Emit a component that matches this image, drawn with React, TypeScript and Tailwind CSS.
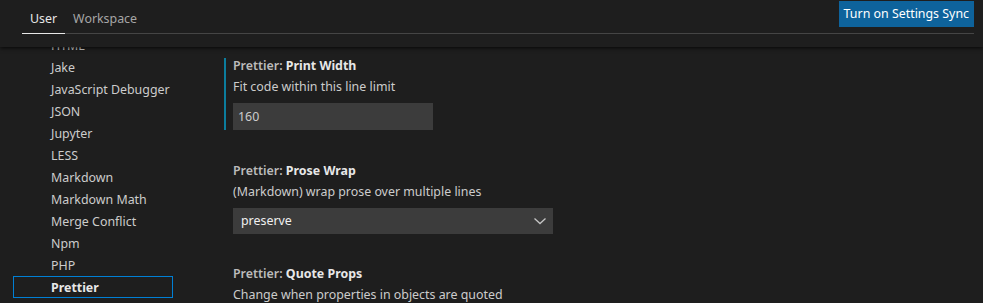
import React from "react";

const navItems = [
  "HTML",
  "Jake",
  "JavaScript Debugger",
  "JSON",
  "Jupyter",
  "LESS",
  "Markdown",
  "Markdown Math",
  "Merge Conflict",
  "Npm",
  "PHP",
  "Prettier",
];

function Chevron() {
  return (
    <svg width="14" height="8" viewBox="0 0 14 8" fill="none">
      <path d="M1.5 1.5 L7 6.5 L12.5 1.5" stroke="#c5c5c5" strokeWidth="1.3" />
    </svg>
  );
}

export default function App() {
  return (
    <div
      className="w-[983px] h-[303px] overflow-hidden bg-[#1e1e1e] text-[12.4px] text-[#cccccc] flex flex-col whitespace-nowrap"
      style={{ fontFamily: '"Noto Sans", "Open Sans", sans-serif' }}
    >
      <div className="h-[47px] shrink-0 relative z-10 bg-[#1e1e1e] shadow-[0_1px_4px_rgba(0,0,0,0.8)]">
        <div className="ml-[22px] mr-[9px] h-[34px] flex justify-between border-b border-[#454545]">
          <div className="flex items-end">
            <div className="px-[8px] leading-[20px] pb-[4px] -mb-px border-b border-[#e7e7e7] text-[#e7e7e7]">
              User
            </div>
            <div className="px-[8px] leading-[20px] pb-[4px] -mb-px border-b border-transparent text-[#a6a6a6]">
              Workspace
            </div>
          </div>
          <button className="mt-px h-[26px] px-[5px] bg-[#0e639c] text-white text-[12.4px] leading-[26px] self-start">
            Turn on Settings Sync
          </button>
        </div>
      </div>

      <div className="flex flex-1 min-h-0">
        <div className="w-[211px] shrink-0 overflow-hidden pl-[13px]">
          <div className="-mt-[12px] w-[160px] flex flex-col">
            {navItems.map((n) =>
              n === "Prettier" ? (
                <div
                  key={n}
                  className="-mt-px h-[22px] leading-[22px] pl-[37px] border border-[#007fd4] font-bold text-[#e7e7e7]"
                >
                  {n}
                </div>
              ) : (
                <div key={n} className="h-[22px] leading-[22px] pl-[38px]">
                  {n}
                </div>
              )
            )}
          </div>
        </div>

        <div className="flex-1 flex flex-col pt-[11px]">
          <div className="ml-[13px] border-l-2 border-[#0c7d9d] pl-[7px] flex flex-col">
            <div className="pt-px leading-[14px] text-[#bbbbbb] font-semibold">
              Prettier: <span className="font-bold text-[#e7e7e7]">Print Width</span>
            </div>
            <div className="leading-[18px] mt-[5px]">Fit code within this line limit</div>
            <div className="mt-[7px] w-[200px] h-[27px] bg-[#3c3c3c] pl-[5px] leading-[27px] text-[#cccccc]">
              160
            </div>
          </div>

          <div className="ml-[15px] pl-[7px] mt-[33px] flex flex-col">
            <div className="pt-px leading-[14px] text-[#bbbbbb] font-semibold">
              Prettier: <span className="font-bold text-[#e7e7e7]">Prose Wrap</span>
            </div>
            <div className="leading-[18px] mt-[5px]">(Markdown) wrap prose over multiple lines</div>
            <div className="mt-[7px] w-[320px] h-[26px] bg-[#3c3c3c] pl-[8px] pr-[6px] flex items-center justify-between text-[#f0f0f0]">
              <span>preserve</span>
              <Chevron />
            </div>
          </div>

          <div className="ml-[15px] pl-[7px] mt-[32px] flex flex-col">
            <div className="pt-px leading-[14px] text-[#bbbbbb] font-semibold">
              Prettier: <span className="font-bold text-[#e7e7e7]">Quote Props</span>
            </div>
            <div className="leading-[18px] mt-[5px]">Change when properties in objects are quoted</div>
          </div>
        </div>
      </div>
    </div>
  );
}
